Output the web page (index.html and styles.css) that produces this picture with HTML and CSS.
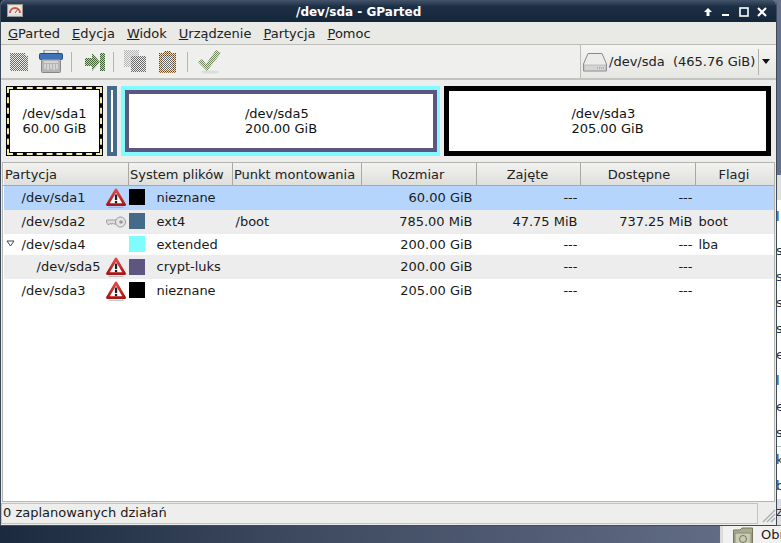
FILE: index.html
```html
<!DOCTYPE html>
<html>
<head>
    <meta charset="utf-8">
    <title>/dev/sda - GParted</title>
    <link rel="stylesheet" href="styles.css">
</head>
<body>
    <svg class="defs" width="0" height="0">
        <defs>
            <pattern id="chk" width="2" height="2" patternUnits="userSpaceOnUse">
                <rect width="2" height="2" fill="#ecece8"/>
                <rect width="1" height="1" fill="#6a6a6a"/>
                <rect x="1" y="1" width="1" height="1" fill="#6a6a6a"/>
            </pattern>
            <pattern id="chk-green" width="2" height="2" patternUnits="userSpaceOnUse">
                <rect width="2" height="2" fill="#c8d2b8"/>
                <rect width="1" height="1" fill="#3f6030"/>
                <rect x="1" y="1" width="1" height="1" fill="#3f6030"/>
            </pattern>
            <pattern id="chk-pale" width="2" height="2" patternUnits="userSpaceOnUse">
                <rect width="2" height="2" fill="#e0e6d6"/>
                <rect width="1" height="1" fill="#72895e"/>
                <rect x="1" y="1" width="1" height="1" fill="#72895e"/>
            </pattern>
            <pattern id="chk-light" width="2" height="2" patternUnits="userSpaceOnUse">
                <rect width="2" height="2" fill="#efefed"/>
                <rect width="1" height="1" fill="#b4b4b4"/>
                <rect x="1" y="1" width="1" height="1" fill="#b4b4b4"/>
            </pattern>
            <pattern id="chk-tan" width="2" height="2" patternUnits="userSpaceOnUse">
                <rect width="2" height="2" fill="#e8e0d0"/>
                <rect width="1" height="1" fill="#8a6a3c"/>
                <rect x="1" y="1" width="1" height="1" fill="#444"/>
            </pattern>
            <linearGradient id="warn-red" x1="0" y1="0" x2="0" y2="1">
                <stop offset="0" stop-color="#e04a4a"/>
                <stop offset="1" stop-color="#a81616"/>
            </linearGradient>
            <symbol id="warn" viewBox="0 0 20 20">
                <path d="M10 2 L18.6 16.6 H1.4 Z" fill="#fff" stroke="url(#warn-red)" stroke-width="2.8" stroke-linejoin="round"/>
                <rect x="8.9" y="6.5" width="2.3" height="5.6" fill="#222"/>
                <rect x="8.9" y="13" width="2.3" height="2.2" fill="#222"/>
                <rect x="2.5" y="18.8" width="15" height="1.2" fill="#888" opacity=".45"/>
            </symbol>
            <symbol id="key" viewBox="0 0 20 12">
                <path d="M.6 4 H11 V8 H7.5 L6.5 7 L5.5 8.4 L4.5 7 L3.5 8.4 H2 L.6 7 Z" fill="#dcdcdc" stroke="#a0a0a0"/>
                <circle cx="14.5" cy="6" r="5" fill="#e4e4e4" stroke="#999"/>
                <circle cx="15" cy="6" r="1.8" fill="#999"/>
            </symbol>
        </defs>
    </svg>

    <div class="back-window">
        <div class="back-head"></div>
        <div class="back-text">
            <span class="first">l</span><span class="gap">s</span><span>s</span><span>s</span><span>s</span><span>e</span><span>l</span><span>e</span><span>s</span><span class="ruled">k</span><span>b</span><span class="shaded">z</span>
        </div>
    </div>
    <div class="dock">
        <svg class="folder" width="20" height="20" viewBox="0 0 20 20">
            <path d="M.5 3 H7 L9 1 H19.5 V20 H.5 Z" fill="#a9ad8c" stroke="#74775c"/>
            <rect x="2" y="6" width="16" height="14" fill="#c9ccb2" stroke="#8a8d72"/>
            <circle cx="10" cy="12" r="3.5" fill="none" stroke="#74775c"/>
        </svg>
        <span>Obr</span>
    </div>

    <div class="window">
        <div class="titlebar">
            <svg class="app-icon" width="16" height="14" viewBox="0 0 16 14">
                <rect x=".5" y=".5" width="15" height="12" fill="#ddd" stroke="#999"/>
                <rect x="2" y="2" width="12" height="8" fill="#eee8d8"/>
                <path d="M3 9 A5 5 0 0 1 13 9" fill="none" stroke="#c55" stroke-width="2"/>
                <path d="M8 9 L11 5" stroke="#474"/>
            </svg>
            <span class="title">/dev/sda - GParted</span>
            <div class="wm-buttons">
                <svg width="12" height="12" viewBox="0 0 12 12"><path d="M6 2 L10 6 H7.5 V10 H4.5 V6 H2 Z" fill="#fff"/></svg>
                <svg width="12" height="12" viewBox="0 0 12 12"><rect x="2" y="8" width="7" height="2" fill="#fff"/></svg>
                <svg width="12" height="12" viewBox="0 0 12 12"><rect x="2" y="2" width="8" height="8" fill="none" stroke="#fff" stroke-width="1.6"/></svg>
                <svg width="12" height="12" viewBox="0 0 12 12"><path d="M2 2 L10 10 M10 2 L2 10" stroke="#fff" stroke-width="2.2"/></svg>
            </div>
        </div>

        <div class="menubar">
            <span><u>G</u>Parted</span>
            <span><u>E</u>dycja</span>
            <span><u>W</u>idok</span>
            <span><u>U</u>rządzenie</span>
            <span><u>P</u>artycja</span>
            <span><u>P</u>omoc</span>
        </div>

        <div class="toolbar-row">
            <div class="toolbar">
                <svg class="tool" width="20" height="20" viewBox="0 0 20 20"><path d="M1 1 H16 L19 4 V19 H1 Z" fill="url(#chk)"/><path d="M16 1 L19 4 H16 Z" fill="#e8e4a0"/></svg>
                <svg class="tool tool-del" width="24" height="24" viewBox="0 0 24 24">
                    <rect x="5" y="0" width="14" height="5" fill="#e8e8e8" stroke="#777"/>
                    <rect x=".5" y="3.5" width="23" height="6" rx="1" fill="#3f73b8" stroke="#234a80"/>
                    <rect x="2.5" y="9.5" width="19" height="13" rx="1" fill="#b4b4b4" stroke="#888"/>
                    <path d="M5 12 H19 M6 14 V19 M9 14 V20 M12 14 V19 M15 14 V20 M18 14 V19" stroke="#f4f4f4"/>
                </svg>
                <i class="tool-sep"></i>
                <svg class="tool tool-arrow" width="21" height="20" viewBox="0 0 21 20"><path d="M1 6 H8 V1 L16 10 L8 19 V14 H1 Z" fill="url(#chk-green)"/><rect x="16" y="1" width="5" height="18" fill="url(#chk-green)"/></svg>
                <i class="tool-sep"></i>
                <svg class="tool tool-copy" width="23" height="23" viewBox="0 0 23 23"><rect x="0" y="0" width="15" height="17" fill="url(#chk-light)"/><path d="M7 6 H22 V22 H7 Z" fill="url(#chk)"/></svg>
                <svg class="tool tool-paste" width="19" height="24" viewBox="0 0 19 24"><path d="M1 3 H6 V1 H13 V3 H18 V23 H1 Z" fill="url(#chk-tan)"/><rect x="4" y="6" width="11" height="14" fill="url(#chk)"/></svg>
                <i class="tool-sep"></i>
                <svg class="tool tool-check" width="25" height="25" viewBox="0 0 25 25"><ellipse cx="13" cy="23" rx="9" ry="1.6" fill="#dcdcd8"/><path d="M1 13 L5 10 L9 15 L19 1 L24 4 L10 22 Z" fill="url(#chk-pale)"/></svg>
            </div>
            <div class="device-combo">
                <svg class="hdd" width="24" height="20" viewBox="0 0 24 20">
                    <path d="M5 1.5 H19 L23.5 12 V19 H.5 V12 Z" fill="#ececec" stroke="#8a8a8a"/>
                    <rect x="1" y="13" width="22" height="5.5" fill="#d4d4d4" stroke="#a4a4a4" stroke-width=".6"/>
                    <path d="M14 16 H21" stroke="#888" stroke-dasharray="1 1"/>
                </svg>
                <span class="device-name">/dev/sda&nbsp;&nbsp;(465.76 GiB)</span>
                <i class="combo-sep"></i>
                <i class="combo-arrow"></i>
            </div>
        </div>

        <div class="disk-map">
            <div class="part part-unknown"><div class="dash-in"><div>/dev/sda1<br>60.00 GiB</div></div></div>
            <div class="part part-boot"><i></i></div>
            <div class="part part-ext">
                <div class="part-luks"><div>/dev/sda5<br>200.00 GiB</div></div>
            </div>
            <div class="part part-last"><div>/dev/sda3<br>205.00 GiB</div></div>
        </div>

        <div class="tree-frame">
            <table class="tree">
                <colgroup>
                    <col class="c-part"><col class="c-fs"><col class="c-mount"><col class="c-size"><col class="c-used"><col class="c-free"><col class="c-flags">
                </colgroup>
                <thead>
                    <tr>
                        <th>Partycja</th>
                        <th>System plików</th>
                        <th>Punkt montowania</th>
                        <th class="mid">Rozmiar</th>
                        <th class="mid">Zajęte</th>
                        <th class="mid free-head">Dostępne</th>
                        <th class="mid">Flagi</th>
                    </tr>
                </thead>
                <tbody>
                    <tr class="selected">
                        <td><div class="name-cell"><span>/dev/sda1</span><svg class="warn"><use href="#warn"/></svg></div></td>
                        <td><div class="fs-cell"><i class="swatch black"></i>nieznane</div></td>
                        <td></td><td class="num size">60.00 GiB</td><td class="num">---</td><td class="num">---</td><td></td>
                    </tr>
                    <tr class="even">
                        <td><div class="name-cell"><span>/dev/sda2</span><svg class="key"><use href="#key"/></svg></div></td>
                        <td><div class="fs-cell"><i class="swatch steel"></i>ext4</div></td>
                        <td>/boot</td><td class="num size">785.00 MiB</td><td class="num">47.75 MiB</td><td class="num">737.25 MiB</td><td>boot</td>
                    </tr>
                    <tr class="short low">
                        <td><div class="name-cell"><svg class="expander" width="9" height="7" viewBox="0 0 9 7"><path d="M1 1 H8 L4.5 6 Z" fill="#fff" stroke="#444"/></svg><span>/dev/sda4</span></div></td>
                        <td><div class="fs-cell"><i class="swatch cyan"></i>extended</div></td>
                        <td></td><td class="num size">200.00 GiB</td><td class="num">---</td><td class="num">---</td><td>lba</td>
                    </tr>
                    <tr class="even low">
                        <td><div class="name-cell nested"><span>/dev/sda5</span><svg class="warn"><use href="#warn"/></svg></div></td>
                        <td><div class="fs-cell"><i class="swatch purple"></i>crypt-luks</div></td>
                        <td></td><td class="num size">200.00 GiB</td><td class="num">---</td><td class="num">---</td><td></td>
                    </tr>
                    <tr class="last low">
                        <td><div class="name-cell"><span>/dev/sda3</span><svg class="warn"><use href="#warn"/></svg></div></td>
                        <td><div class="fs-cell"><i class="swatch black"></i>nieznane</div></td>
                        <td></td><td class="num size">205.00 GiB</td><td class="num">---</td><td class="num">---</td><td></td>
                    </tr>
                </tbody>
            </table>
        </div>

        <div class="statusbar">
            <div class="status-text">0 zaplanowanych działań</div>
            <svg class="grip" width="16" height="16" viewBox="0 0 16 16"><path d="M15 3 L3 15 M15 7 L7 15 M15 11 L11 15" stroke="#aaa" stroke-width="1.2"/></svg>
        </div>
    </div>
</body>
</html>
```

FILE: styles.css
```css
html, body {
    margin: 0;
    height: 100%;
}

body {
    width: 781px;
    height: 543px;
    overflow: hidden;
    position: relative;
    background: linear-gradient(90deg, #1b2a3f, #3f4b61 40%, #66708a);
    font-family: "DejaVu Sans", sans-serif;
    font-size: 13px;
    color: #1a1a1a;
}

.defs {
    position: absolute;
}

.window {
    position: absolute;
    top: 0;
    left: 0;
    width: 775px;
    height: 525px;
    display: flex;
    flex-direction: column;
    overflow: hidden;
    background: #ededeb;
    border-radius: 5px 5px 0 0;
    border-left: 1px solid #3c4a5c;
    border-right: 1px solid #3c4a5c;
    border-bottom: 1px solid #3c4a5c;
}

.titlebar {
    height: 22px;
    display: flex;
    align-items: center;
    position: relative;
    background: linear-gradient(#44546a, #1c2f45 30%, #14263a);
    color: #fff;
    font-size: 12px;
    font-weight: bold;
    flex: none;
}

.app-icon {
    margin-left: 6px;
}

.title {
    position: absolute;
    left: 295px;
    top: 5px;
    line-height: 15px;
}

.wm-buttons {
    margin-left: auto;
    margin-right: 8px;
    margin-top: 2px;
    display: flex;
    gap: 6px;
}

.menubar {
    height: 22px;
    display: flex;
    align-items: center;
    gap: 12px;
    padding-left: 7px;
    flex: none;
    color: #222;
    background: #e9e9e6;
    border-bottom: 1px solid #bdbdb8;
}

.toolbar-row {
    height: 33px;
    display: flex;
    flex: none;
    border-bottom: 2px solid #c4c4bf;
    background: #efefed;
}

.toolbar {
    flex: 1;
    display: flex;
    align-items: center;
    padding-left: 8px;
}

.tool {
    flex: none;
}

.tool-del {
    margin-left: 10px;
}

.tool-arrow {
    margin-left: 1px;
}

.tool-copy {
    margin-left: -1px;
}

.tool-paste {
    margin-left: 11px;
    margin-right: 2px;
}

.tool-check {
    margin-left: -2px;
}

.tool-sep {
    width: 1px;
    height: 20px;
    background: #b4b4b0;
    margin: 0 11px 0 8px;
}

.device-combo {
    width: 196px;
    margin-left: auto;
    display: flex;
    align-items: center;
    box-sizing: border-box;
    padding-left: 2px;
    border-left: 1px solid #bcbcb8;
    background: linear-gradient(#f4f4f2, #e6e6e3);
}

.device-name {
    margin-left: 2px;
    white-space: nowrap;
    color: #222;
}

.combo-sep {
    width: 1px;
    height: 26px;
    background: #b0b0ac;
    margin-left: 3px;
}

.combo-arrow {
    width: 0;
    height: 0;
    margin-left: 3px;
    border-left: 4.5px solid transparent;
    border-right: 4.5px solid transparent;
    border-top: 5px solid #111;
}

.disk-map {
    height: 70px;
    padding: 6px 5px 4px 5px;
    display: flex;
    gap: 4px;
    flex: none;
    line-height: 15px;
    color: #111;
}

.part {
    box-sizing: border-box;
    height: 70px;
    display: flex;
    align-items: center;
    justify-content: center;
}

.part-unknown {
    width: 97px;
    padding: 1px;
    background: #000;
}

.dash-in {
    box-sizing: border-box;
    width: 100%;
    height: 100%;
    display: flex;
    align-items: center;
    justify-content: center;
    border: 2px dashed #f3eea0;
    background: #fff;
    background-clip: padding-box;
    box-shadow: inset 0 0 0 1px #000;
}

.part-boot {
    width: 10px;
    background: #466b8a;
}

.part-boot i {
    width: 2px;
    height: 62px;
    background: #fff;
}

.part-ext {
    width: 319px;
    background: #7efcff;
    padding: 4px 3px 4px 4px;
}

.part-luks {
    box-sizing: border-box;
    flex: 1;
    height: 62px;
    background: #fff;
    border: 4px solid #5e5581;
    display: flex;
    align-items: center;
    justify-content: center;
}

.part-last {
    width: 327px;
    background: #fff;
    border: 5px solid #000;
}

.tree-frame {
    flex: 1;
    margin: 2px 1px 1px 1px;
    background: #fff;
    border: 1px solid #b5b5b0;
    overflow: hidden;
}

.tree {
    border-collapse: collapse;
    table-layout: fixed;
    width: 771px;
}

.c-part { width: 125px; }
.c-fs { width: 104px; }
.c-mount { width: 129px; }
.c-size { width: 115px; }
.c-used { width: 104px; }
.c-free { width: 115px; }
.c-flags { width: 79px; }

.tree th {
    height: 22px;
    padding: 0 3px 0 1px;
    font-weight: normal;
    text-align: left;
    color: #222;
    white-space: nowrap;
    overflow: hidden;
    background: linear-gradient(#f2f2f0, #dededb);
    border-right: 1px solid #a9a9a4;
    border-left: 1px solid #fafafa;
    border-bottom: 1px solid #a9a9a4;
}

.tree th.mid {
    text-align: center;
}

.tree th.free-head {
    padding-left: 5px;
}

.tree td {
    height: 24px;
    padding: 0 3px 1px;
    box-sizing: border-box;
    white-space: nowrap;
}

.tree tr.low td {
    padding-bottom: 0;
}

.tree tr.short td {
    height: 21px;
}

.tree tr.last td {
    height: 23px;
}

.selected {
    background: #b6d5fd;
}

.even {
    background: #ededed;
}

.tree td.num {
    text-align: right;
}

.tree td.size {
    padding-right: 4px;
}

.name-cell {
    display: flex;
    align-items: center;
    padding-left: 15px;
    position: relative;
}

.name-cell.nested {
    padding-left: 30px;
}

.warn {
    position: absolute;
    right: 0;
    top: -2px;
    width: 20px;
    height: 20px;
}

.key {
    position: absolute;
    right: 0;
    top: 2px;
    width: 20px;
    height: 12px;
}

.expander {
    position: absolute;
    left: -1px;
    top: 3px;
}

.fs-cell {
    display: flex;
    align-items: center;
    margin-left: -3px;
}

.swatch {
    width: 16px;
    height: 16px;
    margin-right: 12px;
    flex: none;
}

.black { background: #000; }
.steel { background: #466b8a; }
.cyan { background: #7efcff; }
.purple { background: #5e5581; }

.statusbar {
    height: 22px;
    display: flex;
    flex: none;
}

.status-text {
    box-sizing: border-box;
    width: 757px;
    height: 21px;
    padding-left: 1px;
    line-height: 18px;
    border: 1px solid #c4c4bf;
    background: #eeeeec;
}

.grip {
    margin-left: 2px;
    margin-top: 4px;
}

/* the window behind, only a sliver of it shows at the right edge */
.back-window {
    position: absolute;
    top: 175px;
    right: 0;
    width: 4px;
    height: 350px;
    background: #fff;
    overflow: hidden;
}

.back-head {
    height: 25px;
    background: #e0e0dc;
}

.back-text {
    display: flex;
    flex-direction: column;
    line-height: 26px;
    margin-left: -1px;
    color: #333;
}

.back-text .first {
    margin-top: 4px;
}

.back-text .gap {
    margin-top: 8px;
}

.back-text .ruled {
    border-top: 1px solid #bbb;
}

.back-text .shaded {
    background: #dcdcdc;
}

.dock {
    position: absolute;
    left: 720px;
    top: 526px;
    right: 0;
    bottom: 0;
    display: flex;
    align-items: center;
    gap: 8px;
    padding-left: 10px;
    background: #f1f1f1;
    border-left: 3px solid #dcdcdc;
    overflow: hidden;
    white-space: nowrap;
}

.folder {
    flex: none;
    margin-top: 4px;
}
```
